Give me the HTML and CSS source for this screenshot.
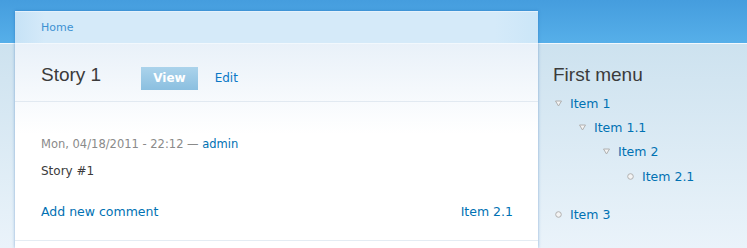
FILE: index.html
```html
<!doctype html>
<html>
<head>
<meta charset="utf-8">
<link rel="stylesheet" href="styles.css">
<title>Story 1</title>
</head>
<body>
<div class="page">
  <main class="card">
    <div class="breadcrumb"><a href="#">Home</a></div>
    <div class="card-body">
      <div class="title-bar">
        <h1>Story 1</h1>
        <ul class="tabs">
          <li class="active"><a href="#">View</a></li>
          <li><a href="#">Edit</a></li>
        </ul>
      </div>
      <article class="node">
        <div class="meta">Mon, 04/18/2011 - 22:12 — <a href="#">admin</a></div>
        <p class="text">Story #1</p>
        <div class="links">
          <a href="#">Add new comment</a>
          <a href="#">Item 2.1</a>
        </div>
      </article>
    </div>
  </main>

  <aside class="sidebar">
    <h2>First menu</h2>
    <ul class="menu">
      <li>
        <div class="row"><svg class="icon" viewBox="0 0 7 7"><polygon points="0.5,1 6.5,1 3.5,6" /></svg><a href="#">Item 1</a></div>
        <ul>
          <li>
            <div class="row"><svg class="icon" viewBox="0 0 7 7"><polygon points="0.5,1 6.5,1 3.5,6" /></svg><a href="#">Item 1.1</a></div>
            <ul>
              <li>
                <div class="row"><svg class="icon" viewBox="0 0 7 7"><polygon points="0.5,1 6.5,1 3.5,6" /></svg><a href="#">Item 2</a></div>
                <ul>
                  <li><div class="row"><svg class="icon" viewBox="0 0 7 7"><circle cx="3.5" cy="3.5" r="2.8" /></svg><a href="#">Item 2.1</a></div></li>
                </ul>
              </li>
            </ul>
          </li>
        </ul>
      </li>
      <li><div class="row"><svg class="icon" viewBox="0 0 7 7"><circle cx="3.5" cy="3.5" r="2.8" /></svg><a href="#">Item 3</a></div></li>
    </ul>
  </aside>
</div>
</body>
</html>
```

FILE: styles.css
```css
* { margin: 0; padding: 0; }
html, body { height: 100%; }
body {
	font: 12px "DejaVu Sans", Verdana, sans-serif;
	color: #3b3b3b;
	background: linear-gradient(to bottom, #459dde 0, #56afe9 43px, #f2f8fd 43px, #f2f8fd 44px, #cde2ef 44px, #eaf3fa 248px);
	overflow: hidden;
}
a { color: #0071b3; text-decoration: none; }
ul { list-style: none; }

.page {
	display: flex;
	align-items: flex-start;
	padding: 11px 0 0 15px;
}

/* main column */
.card {
	width: 523px;
	min-height: 237px;
	flex: none;
	background: #fff;
	box-shadow: 0 0 3px rgba(20, 90, 170, 0.45);
}
.breadcrumb {
	height: 31px;
	line-height: 31px;
	padding-left: 26px;
	font-size: 11px;
	background: linear-gradient(to right, #c6e2f6 0, #d5eaf9 30px, #d5eaf9 480px, #cbe6f8 523px);
	border-top: 1px solid #e4f1fc;
	border-bottom: 1px solid #f2f8fd;
}
.breadcrumb a { color: #3e92d3; }
.card-body {
	background: linear-gradient(to bottom, #e9f1f9 0, #ffffff 90px);
}
.title-bar {
	display: flex;
	align-items: flex-start;
	padding: 20px 25px 11px 26px;
	border-bottom: 1px solid #e1e9f1;
}
h1, h2 {
	font: normal 19px/22px "Liberation Sans", Arial, sans-serif;
	color: #3b3b3b;
}
.tabs {
	display: flex;
	margin: 3px 0 0 40px;
}
.tabs a {
	display: block;
	height: 23px;
	line-height: 23px;
	padding: 0 12px;
	font-size: 12px;
	color: #0a78c6;
}
.tabs .active a {
	color: #fff;
	font-weight: bold;
	background: linear-gradient(to bottom, #abd3eb, #8bbfe0);
}
.tabs li + li a { padding-left: 17px; }

.node {
	padding: 34px 25px 19px 26px;
	border-bottom: 1px solid #e4ecf3;
}
.meta {
	font-size: 11.5px;
	line-height: 16px;
	color: #8a8a8a;
}
.text {
	margin-top: 10px;
	line-height: 18px;
	color: #3b3b3b;
}
.links {
	display: flex;
	justify-content: space-between;
	margin-top: 23px;
	font-size: 12.5px;
	line-height: 18px;
}

/* sidebar */
.sidebar {
	padding: 53px 0 0 15px;
}
.menu { margin-top: 5px; font-size: 12.5px; }
.menu ul { padding-left: 24px; }
.menu > li + li { margin-top: 14px; }
.row {
	display: flex;
	align-items: center;
	height: 24.4px;
	padding-left: 2px;
}
.icon {
	width: 7px;
	height: 7px;
	margin-right: 8px;
	fill: #f4f4f4;
	stroke: #b0b0b0;
	stroke-width: 1;
}
```
